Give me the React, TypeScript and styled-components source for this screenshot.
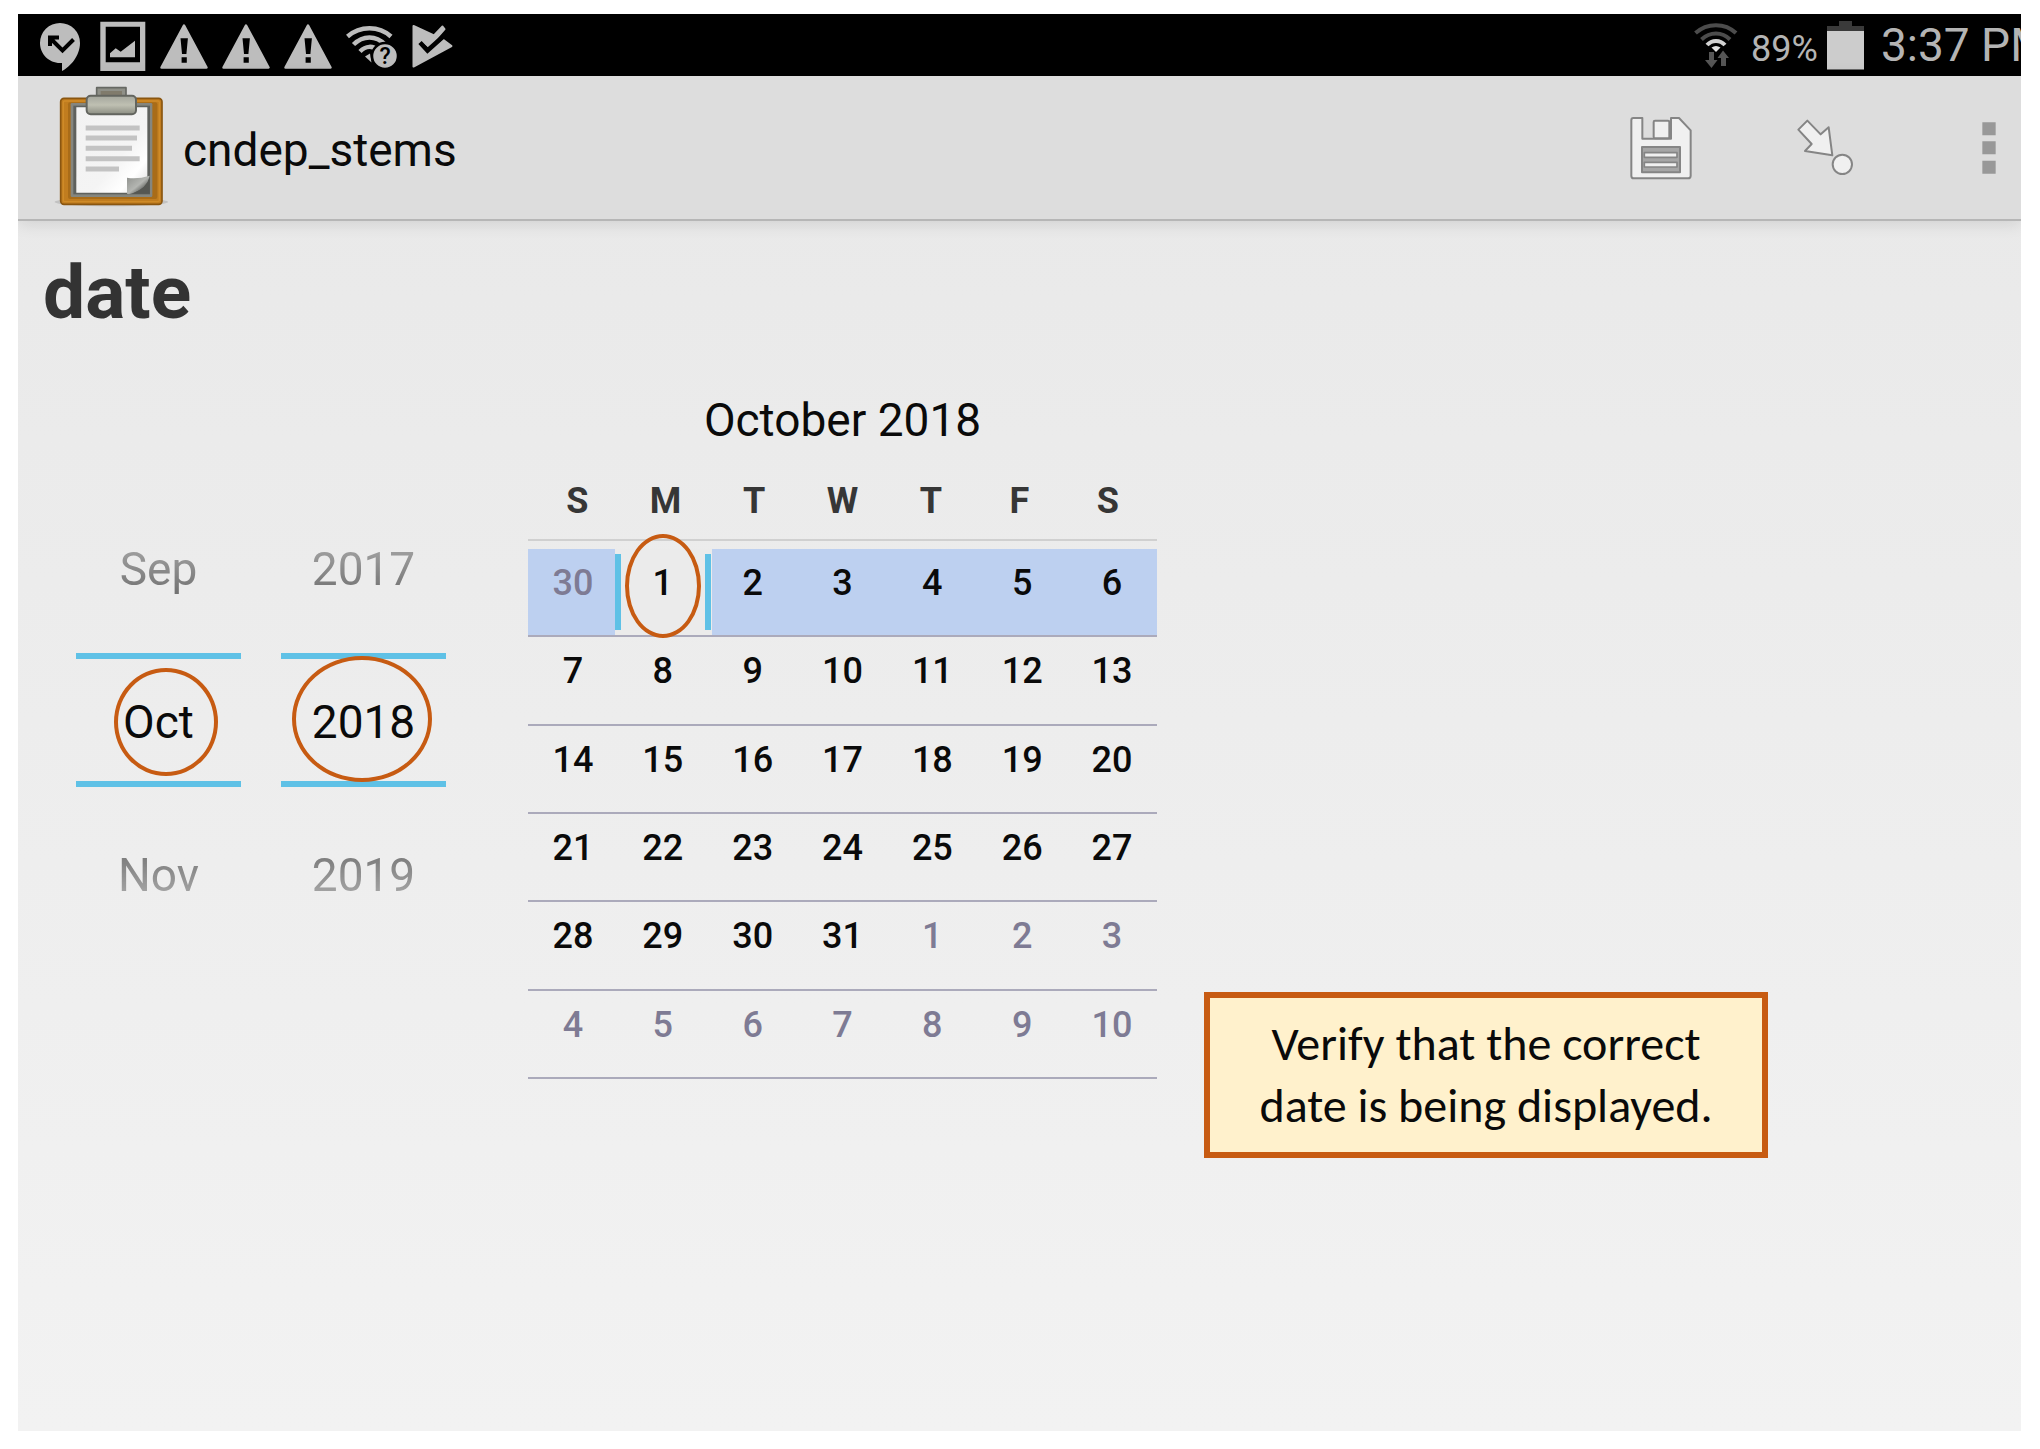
import React, { useState } from "react";
import styled, { createGlobalStyle, css } from "styled-components";

const accent = "#c75b12";
const cyan = "#5fc1e6";
const statusGrey = "#bdbdbd";

const GlobalStyle = createGlobalStyle`
  * { box-sizing: border-box; }
  body { margin: 0; background: #ffffff; font-family: Roboto, "Liberation Sans", sans-serif; }
  button, input { font: inherit; color: inherit; }
`;

const Screen = styled.div`
  display: flex;
  flex-direction: column;
  min-height: calc(100vh - 32px);
  margin: 14px 19px 18px 18px;
  overflow: hidden;
  background: linear-gradient(#e8e8e8, #f2f2f2);
`;

const StatusBar = styled.div`
  display: flex;
  align-items: center;
  height: 62px;
  padding-left: 11px;
  background: #000000;
  color: #b4b4b4;
  white-space: nowrap;
`;

const StatusIcon = styled.svg`
  flex: none;
  width: 62px;
  height: 62px;
`;

const StatusInfo = styled.div`
  display: flex;
  align-items: center;
  margin-left: auto;
`;

const BatteryLevel = styled.span`
  width: 80px;
  padding-left: 4px;
  font-size: 36px;
  line-height: 62px;
  padding-top: 4px;
  height: 62px;
`;

const BatteryIcon = styled.svg`
  width: 37px;
  height: 62px;
`;

const Clock = styled.span`
  width: 140px;
  margin-left: 17px;
  overflow: hidden;
  font-size: 46px;
  line-height: 62px;
`;

const AppBar = styled.header`
  position: relative;
  display: flex;
  align-items: center;
  height: 145px;
  padding-left: 36px;
  border-bottom: 2px solid #b6b6b6;
  background: #dddddd;
  box-shadow: 0 2px 16px rgba(0, 0, 0, 0.12);
`;

const ClipboardIcon = styled.svg`
  width: 114px;
  height: 122px;
  margin-bottom: 4px;
`;

const AppTitle = styled.h1`
  margin: 4px 0 0 15px;
  font-size: 46px;
  font-weight: 400;
  line-height: 56px;
  color: #0a0a0a;
`;

const Actions = styled.div`
  display: flex;
  margin: 0 -50px 0 auto;
`;

const ActionButton = styled.button`
  display: grid;
  place-items: center;
  width: 164px;
  height: 96px;
  padding: 0;
  border: 0;
  background: none;
`;

const ActionIcon = styled.svg`
  width: 64px;
  height: 64px;
`;

const Content = styled.main`
  padding: 27px 25px 0;
`;

const Question = styled.h2`
  margin: 0;
  font-size: 75px;
  font-weight: 700;
  line-height: 88px;
  color: #333333;
`;

const DateRow = styled.div`
  display: flex;
  align-items: flex-start;
  margin-top: 56px;
  padding-left: 33px;
`;

const Pickers = styled.div`
  display: flex;
  gap: 40px;
  padding-top: 145px;
`;

const Picker = styled.div`
  display: flex;
  flex-direction: column;
  gap: 56px;
  width: 165px;
  font-size: 46px;
  line-height: 56px;
`;

const StepButton = styled.button<{ $fade: "up" | "down" }>`
  height: 60px;
  padding: 4px 0 0;
  border: 0;
  background: none;
  color: #6e6e6e;
  text-align: center;
  mask-image: linear-gradient(
    ${(p) => (p.$fade === "up" ? "to top" : "to bottom")},
    rgba(0, 0, 0, 1),
    rgba(0, 0, 0, 0.5)
  );
`;

const PickerValue = styled.label`
  position: relative;
  display: block;
  height: 134px;
  border: solid ${cyan};
  border-width: 6px 0;
`;

const ValueInput = styled.input`
  width: 100%;
  height: 100%;
  padding: 4px 0 0;
  border: 0;
  outline: 0;
  background: none;
  color: #0a0a0a;
  text-align: center;
`;

const Ring = styled.span<{ $w: number; $h: number; $x: number; $y: number }>`
  position: absolute;
  z-index: 2;
  left: ${(p) => p.$x}px;
  top: ${(p) => p.$y}px;
  width: ${(p) => p.$w}px;
  height: ${(p) => p.$h}px;
  border: 4px solid ${accent};
  border-radius: 50%;
  pointer-events: none;
`;

const Calendar = styled.table`
  display: block;
  width: 629px;
  margin-left: 82px;
  border-spacing: 0;
`;

const MonthTitle = styled.caption`
  display: block;
  font-size: 46px;
  line-height: 56px;
  color: #0a0a0a;
`;

const WeekHead = styled.thead`
  display: block;
  margin: 31px 0 8px;
  border-bottom: 2px solid #d0d0d0;
`;

const WeekDays = styled.tr`
  display: grid;
  grid-template-columns: repeat(7, 1fr);
  padding: 0 5px 16px;
`;

const DayName = styled.th`
  padding: 0;
  font-size: 36px;
  font-weight: 700;
  line-height: 44px;
  color: #363636;
`;

const Weeks = styled.tbody`
  display: grid;
  grid-auto-rows: 1fr;
  height: 530px;
`;

const Week = styled.tr<{ $active: boolean }>`
  display: grid;
  grid-template-columns: repeat(7, 1fr);
  border-bottom: 2px solid #abaabb;
  background: ${(p) => (p.$active ? "#bdd0f0" : "none")};
`;

const selectedDay = css`
  &::before {
    content: "";
    position: absolute;
    inset: 0 -4px 0 -3px;
    background: #ebebeb;
  }
  &::after {
    content: "";
    position: absolute;
    inset: 5px -3px;
    border: solid ${cyan};
    border-width: 0 6px;
  }
`;

const DayCell = styled.td<{ $selected: boolean }>`
  position: relative;
  padding: 0;
  ${(p) => p.$selected && selectedDay}
`;

const DayButton = styled.button<{ $muted: boolean }>`
  position: relative;
  z-index: 1;
  display: block;
  width: 100%;
  padding: 12px 0 0;
  border: 0;
  background: none;
  font-size: 36px;
  font-weight: 500;
  line-height: 44px;
  color: ${(p) => (p.$muted ? "#7e7b94" : "#0a0a0a")};
`;

const Callout = styled.aside`
  width: 564px;
  margin: 600px 0 0 47px;
  padding: 15px 12px;
  border: 6px solid ${accent};
  background: #fff1cc;
  font-family: Carlito, Lato, sans-serif;
  font-size: 48px;
  line-height: 62px;
  color: #0a0a0a;
  text-align: center;
  white-space: nowrap;
`;

const MissedCallIcon = () => (
  <StatusIcon viewBox="0 0 62 62" aria-hidden="true">
    <path d="M31 9a20 20 0 0 0-20 20c0 11 9 20 20 20h2v8c8-4 18-15 18-28A20 20 0 0 0 31 9z" fill={statusGrey} />
    <path d="M21 32v-8.500h9M21 24l12.500 12.500L44.500 25.500" fill="none" stroke="#000" strokeWidth="4" />
  </StatusIcon>
);

const PictureIcon = () => (
  <StatusIcon viewBox="0 0 62 62" aria-hidden="true">
    <path fillRule="evenodd" d="M9.300 7.700h45V57h-45zM14.700 12.700v35.600H49V12.700z" fill={statusGrey} />
    <path d="M19 43.300v-4l5.700-5 5 3.400L44 26.700v16.600z" fill={statusGrey} />
  </StatusIcon>
);

const WarningIcon = () => (
  <StatusIcon viewBox="0 0 62 62" aria-hidden="true">
    <path d="M31 11.500L53.500 53.500h-45z" fill={statusGrey} stroke={statusGrey} strokeWidth="2.500" strokeLinejoin="round" />
    <path d="M27.500 24.300h7.400l-1.500 15.700h-4.400zM28.600 43.300h5.200v5.400h-5.200z" fill="#000" />
  </StatusIcon>
);

const WifiUnknownIcon = () => (
  <StatusIcon viewBox="0 0 62 62" aria-hidden="true">
    <g fill="none" stroke={statusGrey} strokeWidth="4.500">
      <path d="M8.500 22.500C21 11.500 40 11.500 52 22.500" />
      <path d="M14.500 30.500C24 21 37 21 46 30.500" />
      <path d="M21 37.500C27 31.500 34 31.500 39 36.500" />
    </g>
    <path d="M26 42.500l5-3 1.500 9z" fill={statusGrey} />
    <circle cx="46" cy="42" r="13" fill={statusGrey} stroke="#000" strokeWidth="2.500" />
    <text x="46" y="50" textAnchor="middle" fontFamily="Roboto, sans-serif" fontWeight="500" fontSize="23" fill="#000">
      ?
    </text>
  </StatusIcon>
);

const PlayCheckIcon = () => (
  <StatusIcon viewBox="0 0 62 62" aria-hidden="true">
    <path
      d="M12.500 12L33 21.500 41.500 12.500 43.500 15 28 33 21 27 18.500 30 27 38.500 42.500 26 50.500 32 12.500 52.500z"
      fill={statusGrey}
      stroke={statusGrey}
      strokeWidth="2"
      strokeLinejoin="round"
    />
    <path d="M19 28.500l7.500 8L45 20" fill="none" stroke="#000" strokeWidth="4.500" />
  </StatusIcon>
);

const WifiTrafficIcon = () => (
  <StatusIcon viewBox="0 0 62 62" aria-hidden="true">
    <g fill="none" strokeWidth="4">
      <path d="M10.500 19C22 8.500 40 8.500 51 19" stroke="#4c4c4c" />
      <path d="M16.500 25.500C25 17.500 37 17.500 45 25.500" stroke="#4c4c4c" />
      <path d="M22 31C27 25.500 35 25.500 40 31" stroke="#d2d2d2" />
    </g>
    <path d="M26.500 33.500q4.500-3 9 0L31 38z" fill="#e2e2e2" />
    <path d="M24 38h5v8h3.500L26.500 54 20 46h4zM36 52V44h-3.500L38 36.500 44 44h-3v8z" fill="#555" />
  </StatusIcon>
);

const Clipboard = () => (
  <ClipboardIcon viewBox="162 252 342 366" aria-hidden="true">
    <defs>
      <linearGradient id="paper" x1="0" y1="0" x2="1" y2="1">
        <stop offset="0" stopColor="#f2f2f2" />
        <stop offset="0.600" stopColor="#f4f4f4" />
        <stop offset="0.800" stopColor="#ffffff" />
        <stop offset="1" stopColor="#dcdcdc" />
      </linearGradient>
      <linearGradient id="clip" x1="0" y1="0" x2="0" y2="1">
        <stop offset="0" stopColor="#a3a59c" />
        <stop offset="0.500" stopColor="#bfc0b2" />
        <stop offset="1" stopColor="#8b8d82" />
      </linearGradient>
      <linearGradient id="curl" x1="0" y1="0" x2="1" y2="1">
        <stop offset="0" stopColor="#8e908c" />
        <stop offset="0.500" stopColor="#b4b6b2" />
        <stop offset="0.800" stopColor="#4c4e4b" />
      </linearGradient>
    </defs>
    <ellipse cx="334" cy="603" rx="170" ry="13" fill="#000" opacity="0.120" />
    <rect x="182" y="292" width="304" height="318" rx="10" fill="#c17d1f" stroke="#8a5610" strokeWidth="5" />
    <rect x="190" y="300" width="288" height="302" rx="4" fill="none" stroke="#cf8b28" strokeWidth="4" />
    <rect x="204" y="304" width="268" height="290" rx="6" fill="#a96c18" />
    <rect x="212" y="306" width="245" height="282" rx="4" fill="#85867f" />
    <rect x="220" y="314" width="230" height="266" fill="#5f615d" />
    <path d="M229 319h213v208l-60 48H229z" fill="url(#paper)" />
    <path d="M381 530q32 5 68-6-2 38-62 56l-6-2z" fill="url(#curl)" />
    <path d="M449 526v52h-52q44-16 52-52z" fill="#555753" />
    <path d="M257 381h162M257 411h154M257 442h139M257 473h162M257 504h100" stroke="#c3c3c3" strokeWidth="15" />
    <path d="M290 290v-30h88v30" fill="#8f9088" stroke="#666863" strokeWidth="5" strokeLinejoin="round" />
    <rect x="302" y="270" width="64" height="22" fill="#807b6c" />
    <rect x="260" y="284" width="148" height="56" rx="12" fill="url(#clip)" stroke="#63655f" strokeWidth="6" />
  </ClipboardIcon>
);

const SaveIcon = () => (
  <ActionIcon viewBox="86 347 192 192" aria-hidden="true">
    <g stroke="#858585" strokeWidth="6" strokeLinejoin="round" fill="#f0f0f0">
      <path d="M99 353h27v62h86v-62h24l35 37v136q0 8-8 8H100q-7 0-7-8V360q0-7 6-7z" />
      <rect x="160" y="361" width="47" height="53" rx="4" />
      <rect x="125" y="440" width="114" height="76" fill="#a6a6a6" />
      <path d="M132 457h98v14h-98zM132 486h98v14h-98z" strokeWidth="5" />
    </g>
  </ActionIcon>
);

const JumpIcon = () => (
  <ActionIcon viewBox="579 347 192 192" aria-hidden="true">
    <g stroke="#858585" strokeWidth="6" strokeLinejoin="round" fill="#f0f0f0">
      <path d="M622 361l-27 27 40 43-20 21 82 13-11-84-24 21z" />
      <circle cx="727" cy="492" r="29" />
    </g>
  </ActionIcon>
);

const MenuIcon = () => (
  <ActionIcon viewBox="1071 347 192 192" aria-hidden="true">
    <path d="M1147 366h40v39h-40zM1147 423h40v39h-40zM1147 481h40v39h-40z" fill="#989898" />
  </ActionIcon>
);

const months = ["Jan", "Feb", "Mar", "Apr", "May", "Jun", "Jul", "Aug", "Sep", "Oct", "Nov", "Dec"];
const dayNames = ["S", "M", "T", "W", "T", "F", "S"];
const longMonth = new Intl.DateTimeFormat("en-US", { month: "long", year: "numeric" });

export default function App() {
  const [date, setDate] = useState(new Date(2018, 9, 1));
  const year = date.getFullYear();
  const month = date.getMonth();
  const offset = new Date(year, month, 1).getDay();
  const weeks = Array.from({ length: 6 }, (_, w) =>
    Array.from({ length: 7 }, (_, d) => new Date(year, month, 1 - offset + w * 7 + d))
  );
  const same = (d: Date) => d.getTime() === date.getTime();

  return (
    <>
      <GlobalStyle />
      <Screen>
        <StatusBar>
          <MissedCallIcon />
          <PictureIcon />
          <WarningIcon />
          <WarningIcon />
          <WarningIcon />
          <WifiUnknownIcon />
          <PlayCheckIcon />
          <StatusInfo>
            <WifiTrafficIcon />
            <BatteryLevel>89%</BatteryLevel>
            <BatteryIcon viewBox="0 0 37 62" aria-hidden="true">
              <path d="M0 12h12V7h13v5h12v5H0z" fill="#3a3a3a" />
              <path d="M0 17h37v38.500H0z" fill="#cccccc" />
            </BatteryIcon>
            <Clock>3:37 PM</Clock>
          </StatusInfo>
        </StatusBar>
        <AppBar>
          <Clipboard />
          <AppTitle>cndep_stems</AppTitle>
          <Actions>
            <ActionButton aria-label="Save">
              <SaveIcon />
            </ActionButton>
            <ActionButton aria-label="Go to prompt">
              <JumpIcon />
            </ActionButton>
            <ActionButton aria-label="More options">
              <MenuIcon />
            </ActionButton>
          </Actions>
        </AppBar>
        <Content>
          <Question>date</Question>
          <DateRow>
            <Pickers>
              <Picker>
                <StepButton $fade="up" onClick={() => setDate(new Date(year, month - 1, 1))}>
                  {months[(month + 11) % 12]}
                </StepButton>
                <PickerValue>
                  <ValueInput aria-label="Month" readOnly value={months[month]} />
                  <Ring $w={104} $h={108} $x={38} $y={9} />
                </PickerValue>
                <StepButton $fade="down" onClick={() => setDate(new Date(year, month + 1, 1))}>
                  {months[(month + 1) % 12]}
                </StepButton>
              </Picker>
              <Picker>
                <StepButton $fade="up" onClick={() => setDate(new Date(year - 1, month, 1))}>
                  {year - 1}
                </StepButton>
                <PickerValue>
                  <ValueInput aria-label="Year" readOnly value={year} />
                  <Ring $w={140} $h={126} $x={11} $y={-3} />
                </PickerValue>
                <StepButton $fade="down" onClick={() => setDate(new Date(year + 1, month, 1))}>
                  {year + 1}
                </StepButton>
              </Picker>
            </Pickers>
            <Calendar>
              <MonthTitle>{longMonth.format(date)}</MonthTitle>
              <WeekHead>
                <WeekDays>
                  {dayNames.map((name, i) => (
                    <DayName key={i} scope="col">
                      {name}
                    </DayName>
                  ))}
                </WeekDays>
              </WeekHead>
              <Weeks>
                {weeks.map((week, w) => (
                  <Week key={w} $active={week.some(same)}>
                    {week.map((d) => (
                      <DayCell key={d.getTime()} $selected={same(d)}>
                        <DayButton $muted={d.getMonth() !== month} onClick={() => setDate(d)}>
                          {d.getDate()}
                        </DayButton>
                        {same(d) && <Ring $w={76} $h={104} $x={7} $y={-15} />}
                      </DayCell>
                    ))}
                  </Week>
                ))}
              </Weeks>
            </Calendar>
            <Callout>
              Verify that the correct
              <br />
              date is being displayed.
            </Callout>
          </DateRow>
        </Content>
      </Screen>
    </>
  );
}
